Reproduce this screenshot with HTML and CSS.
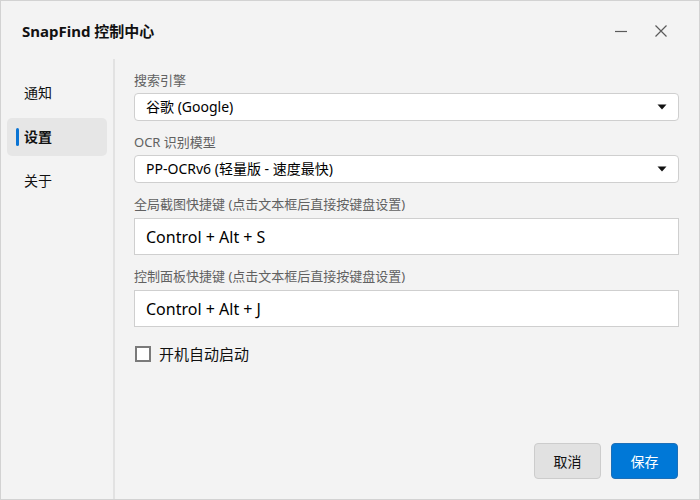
FILE: index.html
```html
<!DOCTYPE html>
<html>
<head>
  <title>SnapFind 控制中心</title>
  <link rel="stylesheet" href="styles.css">
</head>
<body>
  <div class="window">
    <div class="titlebar">
      <span class="title">SnapFind 控制中心</span>
      <div class="win-buttons">
        <span class="win-btn">
          <svg width="14" height="14" viewBox="0 0 14 14"><path d="M1 7.5h12" stroke="#5a5a5a" stroke-width="1.2"/></svg>
        </span>
        <span class="win-btn">
          <svg width="14" height="14" viewBox="0 0 14 14"><path d="M1.5 1.5l11 11M12.5 1.5l-11 11" stroke="#5a5a5a" stroke-width="1.2"/></svg>
        </span>
      </div>
    </div>

    <div class="main">
      <div class="sidebar">
        <div class="nav-item">通知</div>
        <div class="nav-item active">设置</div>
        <div class="nav-item">关于</div>
      </div>

      <div class="content">
        <div class="field">
          <div class="label">搜索引擎</div>
          <div class="select">
            <span>谷歌 (Google)</span>
            <svg class="arrow" width="10" height="6" viewBox="0 0 10 6"><path d="M0.5 0.5h9L5 5.5z" fill="#111"/></svg>
          </div>
        </div>

        <div class="field">
          <div class="label">OCR 识别模型</div>
          <div class="select">
            <span>PP-OCRv6 (轻量版 - 速度最快)</span>
            <svg class="arrow" width="10" height="6" viewBox="0 0 10 6"><path d="M0.5 0.5h9L5 5.5z" fill="#111"/></svg>
          </div>
        </div>

        <div class="field">
          <div class="label">全局截图快捷键 (点击文本框后直接按键盘设置)</div>
          <input class="hotkey" type="text" value="Control + Alt + S" readonly>
        </div>

        <div class="field">
          <div class="label">控制面板快捷键 (点击文本框后直接按键盘设置)</div>
          <input class="hotkey" type="text" value="Control + Alt + J" readonly>
        </div>

        <label class="check">
          <span class="box"></span>
          <span>开机自动启动</span>
        </label>

        <div class="actions">
          <button class="btn">取消</button>
          <button class="btn primary">保存</button>
        </div>
      </div>
    </div>
  </div>
</body>
</html>
```

FILE: styles.css
```css
body {
  margin: 0;
  padding: 0;
  background-color: #f3f3f3;
  font-family: "Noto Sans", "Noto Sans CJK SC", sans-serif;
  color: #111;
}

.window {
  width: 700px;
  height: 500px;
  box-sizing: border-box;
  border: 1px solid #d2d2d2;
  display: flex;
  flex-direction: column;
  background-color: #f3f3f3;
}

/* title bar */
.titlebar {
  height: 58px;
  flex-shrink: 0;
  display: flex;
  align-items: center;
  justify-content: space-between;
  padding: 0 31px 0 21px;
}

.title {
  font-size: 15px;
  font-weight: bold;
  color: #111;
  margin-top: 1px;
}

.win-buttons {
  display: flex;
  gap: 26px;
  margin-top: 2px;
}

.win-btn {
  width: 14px;
  height: 14px;
  display: flex;
}

/* body area */
.main {
  flex: 1;
  display: flex;
  min-height: 0;
}

.sidebar {
  width: 106px;
  padding: 15px 0 0 6px;
  border-right: 2px solid #e2e2e2;
}

.nav-item {
  position: relative;
  width: 100px;
  height: 38px;
  line-height: 38px;
  padding-left: 17px;
  box-sizing: border-box;
  margin-bottom: 6px;
  font-size: 14px;
  border-radius: 5px;
  color: #111;
}

.nav-item.active {
  background-color: #e6e6e6;
  font-weight: bold;
}

.nav-item.active::before {
  content: '';
  position: absolute;
  left: 9px;
  top: 10px;
  width: 3px;
  height: 18px;
  border-radius: 2px;
  background-color: #0a74d4;
}

.content {
  flex: 1;
  display: flex;
  flex-direction: column;
  padding: 12px 20px 20px 19px;
}

.field {
  margin-bottom: 12px;
}

.label {
  font-size: 13px;
  line-height: 18px;
  color: #616161;
  margin-bottom: 4px;
}

.select {
  position: relative;
  height: 28px;
  box-sizing: border-box;
  border: 1px solid #cfcfcf;
  border-radius: 4px;
  background-color: #fff;
  padding-left: 11px;
  font-size: 14px;
  line-height: 26px;
  color: #000;
}

.select .arrow {
  position: absolute;
  right: 11px;
  top: 10px;
}

.hotkey {
  display: block;
  width: 100%;
  height: 37px;
  box-sizing: border-box;
  border: 1px solid #cfcfcf;
  border-radius: 0;
  background-color: #fff;
  padding: 0 11px;
  margin-top: 5px;
  font-family: "Noto Sans", "Noto Sans CJK SC", sans-serif;
  font-size: 16px;
  color: #000;
  outline: none;
}

.check {
  display: flex;
  align-items: center;
  gap: 8px;
  margin-top: 4px;
  margin-left: 1px;
  font-size: 15px;
  color: #111;
}

.check .box {
  width: 16px;
  height: 16px;
  box-sizing: border-box;
  border: 2px solid #7a7a7a;
  background-color: #fff;
}

.actions {
  margin-top: auto;
  display: flex;
  justify-content: flex-end;
  gap: 10px;
  padding-right: 1px;
}

.btn {
  width: 67px;
  height: 36px;
  border: 1px solid #cccccc;
  border-radius: 4px;
  background-color: #e1e1e1;
  font-family: "Noto Sans", "Noto Sans CJK SC", sans-serif;
  font-size: 14px;
  color: #111;
  cursor: pointer;
}

.btn.primary {
  background-color: #0078d7;
  border-color: #1c6fb8;
  color: #fff;
}
```
